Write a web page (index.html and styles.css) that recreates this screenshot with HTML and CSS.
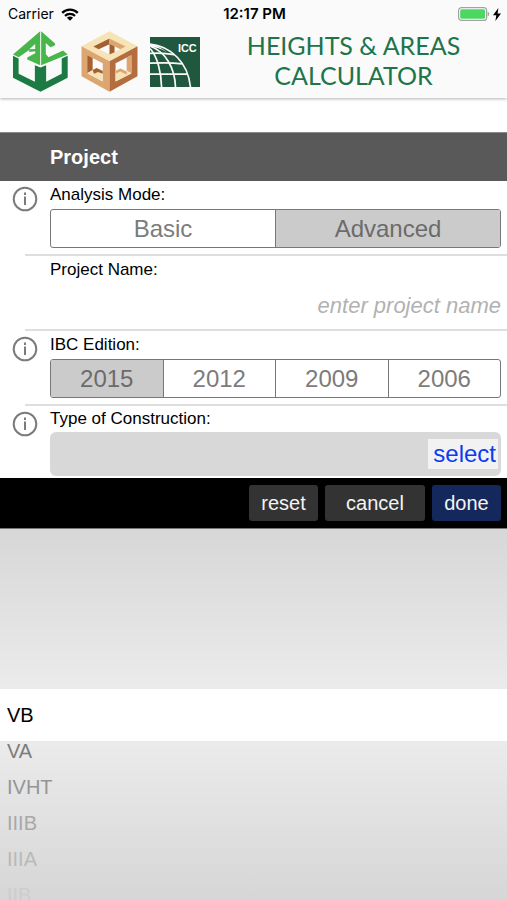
FILE: index.html
```html
<!DOCTYPE html>
<html lang="en">
<head>
<meta charset="utf-8">
<meta name="viewport" content="width=device-width, initial-scale=1">
<title>Heights &amp; Areas Calculator</title>
<link rel="stylesheet" href="styles.css">
</head>
<body>
<div class="app">
  <header class="top">
    <div class="status">
      <div class="status-left">
        <span>Carrier</span>
        <svg class="wifi" viewBox="0 0 18 13" aria-hidden="true">
          <path d="M1.2 4.9C5.500.6 12.500.6 16.800 4.900" fill="none" stroke="#000" stroke-width="2.300"/>
          <path d="M4 7.900c2.800-2.700 7.200-2.700 10 0" fill="none" stroke="#000" stroke-width="2.200"/>
          <path d="M9 12.800 5.900 9.700c1.700-1.500 4.500-1.500 6.200 0z"/>
        </svg>
      </div>
      <div class="status-time">12:17 PM</div>
      <div class="status-right">
        <svg class="battery" viewBox="0 0 32 14" aria-hidden="true">
          <rect x="0.600" y="0.600" width="28" height="12.800" rx="3" fill="#fff" stroke="#a2a2a2" stroke-width="1.200"/>
          <rect x="2.200" y="2.200" width="24.800" height="9.600" rx="1.500" fill="#4cd763"/>
          <path d="M29.700 4.700c2 .6 2 4 0 4.600z" fill="#a2a2a2"/>
        </svg>
        <svg class="bolt" viewBox="0 0 8 13" aria-hidden="true"><path d="M5.400 0 0 7.300h3.300L2.400 13 8 5.400H4.600z"/></svg>
      </div>
    </div>
    <div class="brand">
      <div class="logos">
        <svg class="logo-house" viewBox="8 9 168 184" role="img" aria-label="AWC">
          <path fill="#48b64b" d="M91 10V112L52 95V89L76 76V70L58 72V66L26 88 9 80z"/>
          <path fill="#fafafa" d="M58 64L76 48V63z"/>
          <path fill="#48b64b" d="M94 10L136 47V52L122 58 108 45V78L116 88 160 68 174 80 94 112z"/>
          <path fill="#1d7a43" d="M9 84L26 92V138L75 162V112L92 119 109 112V162L156 138V92L174 84V150L92 192 9 150z"/>
        </svg>
        <svg class="logo-cube" viewBox="6 11 168 181" role="img" aria-label="Wood cube">
          <path fill="#f6e3b6" d="M90 12L173 56 90 101 7 56z"/>
          <path fill="#dda570" d="M7 56L90 101V191L7 145z"/>
          <path fill="#b46d3f" d="M173 56L90 101V191L173 145z"/>
          <path fill="#fafafa" d="M90 33L138 57 90 81 42 57z"/>
          <path fill="#a5602f" d="M90 33V50L58 65 42 57z"/>
          <path fill="#dda570" d="M90 33L138 57 122 65 90 49z"/>
          <path fill="#a5602f" d="M90 49L105 56V74L90 81z"/>
          <path fill="#fafafa" d="M24 83L70 107V161L24 136z"/>
          <path fill="#a5602f" d="M24 83L40 91V127L24 136z"/>
          <path fill="#f6e3b6" d="M24 136L52 121 70 130V161z"/>
          <path fill="#a5602f" d="M40 127L52 121 70 130V138L56 133 44 138z"/>
          <path fill="#fafafa" d="M155 83L108 107V161L155 136z"/>
          <path fill="#dda570" d="M155 83V136L141 129V90z"/>
          <path fill="#f6e3b6" d="M108 130L122 122 155 137 108 161z"/>
          <path fill="#dda570" d="M108 130L122 122 141 131V140L122 131 108 138z"/>
        </svg>
        <svg class="logo-icc" viewBox="0 0 147 147" role="img" aria-label="ICC">
          <rect width="147" height="147" fill="#20573f"/>
          <path fill="#fafafa" d="M0 20C22 25 42 38 48 44 34 34 14 30 0 29z"/>
          <g fill="none" stroke="#fafafa" stroke-width="5">
            <path d="M0 21C62 27 112 76 119 147"/>
            <path d="M0 27C46 42 73 92 75 147"/>
            <path d="M0 34C22 57 33 104 34 147"/>
            <path d="M0 48c30-2 52 0 71 4"/>
            <path d="M0 77c36-2 66-2 94 2"/>
            <path d="M0 109h111"/>
          </g>
          <text class="icc-text" x="82" y="45">ICC</text>
        </svg>
      </div>
      <h1>HEIGHTS &amp; AREAS CALCULATOR</h1>
    </div>
  </header>

  <main class="form">
    <h2>Project</h2>

    <fieldset class="row">
      <button class="info" type="button" aria-label="About analysis mode"><svg viewBox="0 0 26 26" aria-hidden="true"><circle cx="13" cy="13" r="11.300"/><path d="M13 10.500V19M13 6.500v2.400"/></svg></button>
      <div class="body">
        <legend class="label">Analysis Mode:</legend>
        <div class="segments">
          <label><input type="radio" name="mode"><span>Basic</span></label>
          <label><input type="radio" name="mode" checked><span>Advanced</span></label>
        </div>
      </div>
    </fieldset>

    <div class="row">
      <div class="body">
        <label class="label" for="project-name">Project Name:</label>
        <input class="name" id="project-name" type="text" placeholder="enter project name">
      </div>
    </div>

    <fieldset class="row">
      <button class="info" type="button" aria-label="About IBC edition"><svg viewBox="0 0 26 26" aria-hidden="true"><circle cx="13" cy="13" r="11.300"/><path d="M13 10.500V19M13 6.500v2.400"/></svg></button>
      <div class="body">
        <legend class="label">IBC Edition:</legend>
        <div class="segments">
          <label><input type="radio" name="edition" checked><span>2015</span></label>
          <label><input type="radio" name="edition"><span>2012</span></label>
          <label><input type="radio" name="edition"><span>2009</span></label>
          <label><input type="radio" name="edition"><span>2006</span></label>
        </div>
      </div>
    </fieldset>

    <div class="row last">
      <button class="info" type="button" aria-label="About type of construction"><svg viewBox="0 0 26 26" aria-hidden="true"><circle cx="13" cy="13" r="11.300"/><path d="M13 10.500V19M13 6.500v2.400"/></svg></button>
      <div class="body">
        <label class="label" for="construction">Type of Construction:</label>
        <div class="field"><button class="select" id="construction" type="button">select</button></div>
      </div>
    </div>
  </main>

  <div class="actions">
    <button type="button">reset</button>
    <button type="button" class="wide">cancel</button>
    <button type="button" class="done">done</button>
  </div>

  <div class="picker" role="listbox" aria-label="Type of construction">
    <div class="above"></div>
    <div class="current" role="option" aria-selected="true">VB</div>
    <div class="below">
      <div class="option near" role="option">VA</div>
      <div class="option mid" role="option">IVHT</div>
      <div class="option far" role="option">IIIB</div>
      <div class="option faint" role="option">IIIA</div>
      <div class="option ghost" role="option">IIB</div>
    </div>
  </div>
</div>
</body>
</html>
```
FILE: styles.css
```css
* { box-sizing: border-box; }

body {
  margin: 0;
  background: #fff;
  color: #000;
  font-family: "Liberation Sans", Arial, sans-serif;
}

button { font: inherit; border: 0; padding: 0; cursor: pointer; }

.app {
  display: flex;
  flex-direction: column;
  height: 100vh;
  overflow: hidden;
}

.top {
  background: #fafafa;
  box-shadow: 0 1px 3px rgba(0, 0, 0, 0.3);
  padding-bottom: 6px;
}

.status {
  display: grid;
  grid-template-columns: 1fr auto 1fr;
  align-items: center;
  height: 28px;
  padding: 0 6px 0 8px;
  font: 14px/28px Inter, sans-serif;
}
.status-left, .status-right { display: flex; align-items: center; gap: 7px; }
.status-right { justify-content: flex-end; gap: 3px; }
.status-time { font-size: 15px; font-weight: 600; }
.wifi { width: 18px; height: 13px; }
.battery { width: 32px; height: 14px; }
.bolt { width: 8px; height: 13px; }

.brand {
  display: flex;
  align-items: center;
  padding: 0 0 0 12px;
}
.logos { display: flex; align-items: center; gap: 12px; padding-top: 3px; }
.logo-house { width: 57px; height: 61px; }
.logo-cube { width: 57px; height: 61px; }
.logo-icc { width: 50px; height: 50px; }
.icc-text {
  font: bold 32px "Liberation Sans Narrow", "Liberation Sans", sans-serif;
  fill: #fff;
}

h1 {
  flex: 1;
  margin: 0 auto;
  padding: 0 34px;
  color: #20744a;
  font: 400 25px/30px Lato, sans-serif;
  text-align: center;
}

.form { padding-top: 34px; }

h2 {
  margin: 0;
  padding-left: 50px;
  background: #59595a;
  border-top: 1px solid #8a8a8a;
  color: #fff;
  font-size: 20px;
  line-height: 48px;
}

.row {
  display: flex;
  margin: 0 0 0 25px;
  padding: 0;
  border: 0;
  border-bottom: 2px solid #dedede;
  min-width: 0;
}
.row.last { border: 0; }

.info {
  flex: none;
  width: 26px;
  height: 26px;
  margin: 5px -1px 0 -13px;
  background: none;
}
.info svg {
  display: block;
  fill: none;
  stroke: #7b7b7b;
  stroke-width: 2;
}

.body { flex: 1; padding: 0 6px 6px 13px; }
.row > .body:first-child { padding-left: 25px; }

.label {
  display: block;
  padding: 0;
  font-size: 17px;
  line-height: 28px;
}

.segments {
  display: flex;
  height: 39px;
  border: 1px solid #777;
  border-radius: 3px;
  overflow: hidden;
  color: #7c7c7c;
  font-size: 24px;
  line-height: 38px;
}
.segments label {
  position: relative;
  flex: 1;
  text-align: center;
  cursor: pointer;
}
.segments label + label { border-left: 1px solid #777; }
.segments input { position: absolute; opacity: 0; margin: 0; }
.segments span { display: block; }
.segments input:checked + span { background: #cbcbcb; color: #6b6b6b; }

.name {
  display: block;
  width: 100%;
  height: 39px;
  padding: 4px 0 0;
  border: 0;
  outline: 0;
  background: none;
  font: italic 22px/30px "Liberation Sans", Arial, sans-serif;
  text-align: right;
}
.name::placeholder { color: #b2b2b2; opacity: 1; }

.last .body { padding-bottom: 2px; }
.last .label { line-height: 26px; }
.field {
  display: flex;
  justify-content: flex-end;
  align-items: center;
  height: 44px;
  padding-right: 3px;
  border-radius: 6px;
  background: #d8d8d8;
}
.select {
  height: 30px;
  padding: 0 2px 0 5px;
  background: #f2f2f2;
  color: #0b3df0;
  font-size: 24px;
  line-height: 30px;
}

.actions {
  display: flex;
  justify-content: flex-end;
  gap: 7px;
  padding: 7px 6px;
  background: #000;
  border-bottom: 1px solid #777;
}
.actions button {
  min-width: 69px;
  height: 36px;
  border-radius: 3px;
  background: #333;
  color: #f4f4f4;
  font-size: 20px;
}
.actions .wide { min-width: 100px; }
.actions .done { background: #14285c; }

.picker {
  flex: 1;
  display: flex;
  flex-direction: column;
  min-height: 0;
  font-size: 20px;
}
.above, .below { flex: 1 1 160px; min-height: 0; }
.above { background: linear-gradient(#d7d7d7, #ebebeb); }
.current {
  padding: 0 7px;
  background: #fff;
  line-height: 52px;
}
.below {
  display: flex;
  flex-direction: column;
  gap: 16px;
  padding: 0 7px;
  overflow: hidden;
  background: linear-gradient(#ebebeb, #d6d6d6);
}
.option { flex: none; line-height: 20px; }
.near { color: #7c7c7c; }
.mid { color: #959595; }
.far { color: #a8a8a8; }
.faint { color: #b9b9b9; }
.ghost { color: #cdcdcd; }
```
